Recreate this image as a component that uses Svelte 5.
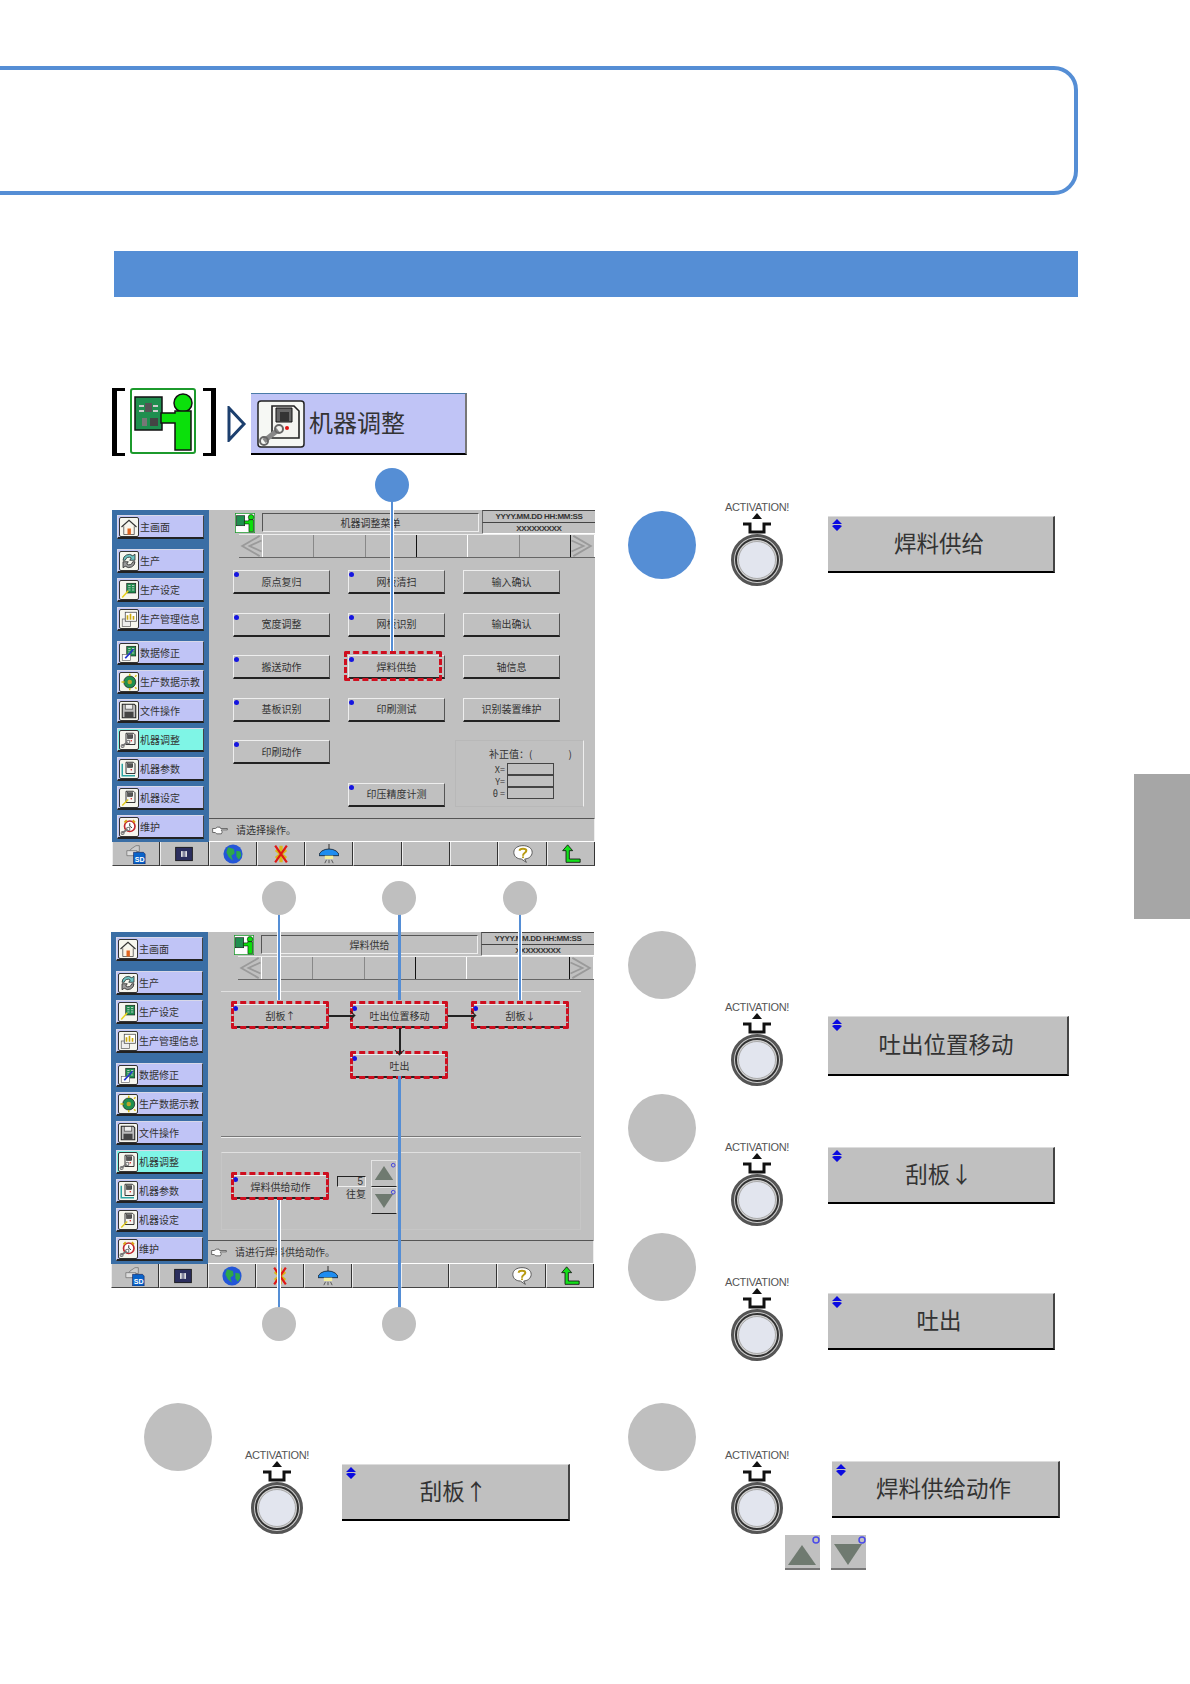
<script>
  // icon bodies, all drawn on a 24x24 box
  const machine = `<path d="M8 3h10l2 2v13H8z" fill="#f4f4f0" stroke="#222" stroke-width="1.2"/><rect x="10" y="5" width="7" height="5" fill="#555" stroke="#111" stroke-width=".6"/><circle cx="15" cy="13" r="1" fill="#d11"/>`;
  const wrench = `<path d="M3 20l7-5" stroke="#777" stroke-width="2.4"/><circle cx="11" cy="14.5" r="2.2" fill="none" stroke="#777" stroke-width="1.4"/><circle cx="3.5" cy="20" r="2" fill="none" stroke="#777" stroke-width="1.4"/>`;
  const board = `<rect x="9" y="3" width="12" height="13" fill="#1f8f4f" stroke="#111" stroke-width=".8"/><path d="M11 6h3M16 6h3M11 9h3M16 9h3M11 12h3M16 12h3" stroke="#ccc" stroke-width="1.2"/>`;
  const icons = {
    home: `<path d="M2 12 12 3l10 9" fill="none" stroke="#333" stroke-width="1.6"/><path d="M5 11v11h14V11" fill="#fbf5e8" stroke="#444"/><rect x="10" y="14" width="4.5" height="8" fill="#e0651f"/>`,
    cycle: `<path d="M4 11a8 8 0 0 1 13-6l3-2v8h-7l2-3a5 5 0 0 0-8 3z" fill="#6fc4c3" stroke="#222" stroke-width="1"/><path d="M20 13a8 8 0 0 1-13 6l-3 2v-8h7l-2 3a5 5 0 0 0 8-3z" fill="#9a9a9a" stroke="#222" stroke-width="1"/>`,
    setting: board + `<path d="M3 22l8-9" stroke="#e8d21d" stroke-width="2"/>`,
    info: `<rect x="3" y="12" width="11" height="10" fill="#eee" stroke="#666"/><rect x="7" y="3" width="15" height="12" fill="#fff" stroke="#444"/><path d="M10 13V7M14 13V5M18 13V8" stroke="#c9a80d" stroke-width="2.2"/>`,
    edit: board + `<rect x="3" y="14" width="11" height="8" fill="#fff" stroke="#555" stroke-width=".8"/><path d="M7 19l11-12" stroke="#2233cc" stroke-width="2.4"/>`,
    teach: `<circle cx="13" cy="12" r="8" fill="#1f8f4f" stroke="#222"/><circle cx="13" cy="12" r="3" fill="#b9a52a"/><path d="M2 12h4M13 1v3M13 20v3M20 5l2-2M20 19l2 2" stroke="#d8c016" stroke-width="2"/>`,
    file: `<path d="M3 3h16l2 2v16H3z" fill="#bbb" stroke="#222" stroke-width="1.4"/><rect x="7" y="3.5" width="10" height="6" fill="#eee" stroke="#333" stroke-width=".8"/><rect x="6" y="13" width="12" height="8" fill="#444"/>`,
    machine: machine + wrench,
    param: machine + `<path d="M3 5v16h17" fill="none" stroke="#2aa3a3" stroke-width="2"/>`,
    setup: machine + `<path d="M3 22l8-8" stroke="#e0c81a" stroke-width="2"/>`,
    maint: `<circle cx="13" cy="11" r="7" fill="#fff" stroke="#c1272d" stroke-width="2.2"/><path d="M13 7v4l3 2" fill="none" stroke="#222" stroke-width="1.2"/><path d="M6 6l3-3M20 6l-3-3" stroke="#d8a516" stroke-width="2.4"/>` + wrench,
    sd: `<path d="M6 6l6-4h4v7H4z" fill="#ccc" stroke="#666" stroke-width=".8"/><path d="M1 8h12v6H1z" fill="#ddd" stroke="#666" stroke-width=".8"/><path d="M9 10h12l2 2v12H9z" fill="#0a63c9" stroke="#114" stroke-width=".6"/><text x="10.5" y="21" font-size="8.5" font-weight="bold" font-family="Liberation Sans" fill="#fff">SD</text>`,
    chip: `<rect x="2" y="4" width="20" height="16" fill="#2b2e5e" stroke="#111"/><rect x="8.5" y="8.5" width="7" height="7" fill="#eee"/><path d="M11 8v8M13 8v8" stroke="#2b2e5e"/>`,
    globe: `<circle cx="12" cy="12" r="11.5" fill="#2356d8"/><path d="M6 4l7 2 1 5-4 3 2 6-5-4-3-6zM16 8l5 1 1 5-3 5-3-4z" fill="#2ea84a"/>`,
    stop: `<path d="M12 2v20M6 7l12 10M6 17 18 7" stroke="#d8b81a" stroke-width="4"/><path d="M5 2l14 20M19 2 5 22" stroke="#e01515" stroke-width="2.6"/>`,
    lamp: `<path d="M12 0v6" stroke="#555" stroke-width="1.6"/><path d="M0 14a12 8 0 0 1 24 0z" fill="#1e8df0" stroke="#123"/><rect x="7" y="14" width="10" height="4" fill="#f3ee9a"/><path d="M7 23l2-4M12 23v-4M17 23l-2-4" stroke="#444"/>`,
    help: `<path d="M12 2c6 0 11 3 11 8s-5 8-9 8l2 4-6-4C5 18 1 15 1 10s5-8 11-8z" fill="#fff" stroke="#444"/><path d="M8 8c0-3 8-3 8 0 0 3-4 2-4 6" fill="none" stroke="#b89a10" stroke-width="2.4"/><circle cx="12" cy="16" r="1.2" fill="#b89a10"/>`,
    back: `<path d="M6 21V8H2l6-7 6 7h-4v10h13v4H6z" fill="#13df1a" stroke="#111"/>`
  };

  const sideItems = [
    { icon: 'home', label: '主画面' },
    { icon: 'cycle', label: '生产', gap: true },
    { icon: 'setting', label: '生产设定' },
    { icon: 'info', label: '生产管理信息' },
    { icon: 'edit', label: '数据修正', gap: true },
    { icon: 'teach', label: '生产数据示教' },
    { icon: 'file', label: '文件操作' },
    { icon: 'machine', label: '机器调整', active: true },
    { icon: 'param', label: '机器参数' },
    { icon: 'setup', label: '机器设定' },
    { icon: 'maint', label: '维护' }
  ];

  const footIcons = ['sd', 'chip', 'globe', 'stop', 'lamp', '', '', '', 'help', 'back'];

  const menu = [
    { label: '原点复归' }, { label: '网板清扫' }, { label: '输入确认', plain: true },
    { label: '宽度调整' }, { label: '网板识别' }, { label: '输出确认', plain: true },
    { label: '搬送动作' }, { label: '焊料供给', hl: true }, { label: '轴信息', plain: true },
    { label: '基板识别' }, { label: '印刷测试' }, { label: '识别装置维护', plain: true },
    { label: '印刷动作' }
  ];

  // callouts, in coordinates of the figure area
  const lines = [
    { x: 280, y1: 29, y2: 195 },
    { x: 167, y1: 442, y2: 544 },
    { x: 287, y1: 442, y2: 544, thick: true },
    { x: 408, y1: 442, y2: 544 },
    { x: 167, y1: 744, y2: 868 },
    { x: 287, y1: 620, y2: 868, thick: true }
  ];
  const dots = [
    { x: 280, y: 29, blue: true },
    { x: 167, y: 442 }, { x: 287, y: 442 }, { x: 408, y: 442 },
    { x: 167, y: 868 }, { x: 287, y: 868 }
  ];
</script>

{#snippet icon(name)}
  <svg class="ico" viewBox="0 0 24 24">{@html icons[name]}</svg>
{/snippet}

{#snippet updown()}
  <svg class="updown" viewBox="0 0 12 12"><path d="M6 0l5 5H1zM3 6h6l2 1-5 5-5-5z" fill="#0a0ae0"/></svg>
{/snippet}

{#snippet chevrons(flip)}
  <svg class="chev" class:flip viewBox="0 0 24 24">
    <path d="M22 1 3 12l19 11M24 6 11 12l13 6" fill="none" stroke="#9a9a9a" stroke-width="2"/>
  </svg>
{/snippet}

{#snippet btn(item)}
  <div class="btn" class:hl={item.hl}>
    {#if !item.plain}<i class="dot"></i>{/if}
    {item.label}
  </div>
{/snippet}

{#snippet screen(title, status, content)}
  <div class="screen">
    <div class="side">
      {#each sideItems as item}
        <div class="side-btn" class:gap={item.gap} class:active={item.active}>
          <span class="side-ico">{@render icon(item.icon)}</span>{item.label}
        </div>
      {/each}
    </div>
    <div class="main">
      <div class="head">
        <svg class="head-ico" viewBox="0 0 66 66">
          <rect x="1" y="1" width="64" height="64" fill="#fff" stroke="#1c9a2c" stroke-width="3"/>
          <rect x="5" y="9" width="27" height="33" fill="#1f8f4f" stroke="#111" stroke-width="2"/>
          <circle cx="53" cy="14" r="9" fill="#0be00b" stroke="#111" stroke-width="2"/>
          <path d="M31 26h14v-4h16v40H46V36H31z" fill="#0be00b" stroke="#111" stroke-width="2"/>
        </svg>
        <div class="title">{title}</div>
        <div class="clock">
          <div>YYYY.MM.DD HH:MM:SS</div>
          <div>XXXXXXXXX</div>
        </div>
      </div>
      <div class="nav">
        <div class="nav-end">{@render chevrons(false)}</div>
        {#each [1, 2, 3, 4, 5, 6] as n}<div class="nav-cell"></div>{/each}
        <div class="nav-end">{@render chevrons(true)}</div>
      </div>
      <div class="content">{@render content()}</div>
      <div class="status">
        <svg class="hand" viewBox="0 0 24 12">
          <path d="M1 3h4l3-2h4l1 2h10v2H14v1l1 1v2l-1 2H7L5 9H1z" fill="#fff" stroke="#333"/>
        </svg>
        {status}
      </div>
    </div>
    <div class="foot">
      {#each footIcons as name}
        <div class="foot-cell">{#if name}{@render icon(name)}{/if}</div>
      {/each}
    </div>
  </div>
{/snippet}

{#snippet menuPage()}
  <div class="menu">
    {#each menu as item}
      {@render btn(item)}
    {/each}
    <div class="offset-panel">
      <div class="offset-title">补正值：(<span></span>)</div>
      <div class="offset-row"><label>X=</label><b></b></div>
      <div class="offset-row"><label>Y=</label><b></b></div>
      <div class="offset-row"><label>θ =</label><b></b></div>
    </div>
    <div class="menu-last">{@render btn({ label: '印压精度计测' })}</div>
  </div>
{/snippet}

{#snippet solderPage()}
  <div class="flow-group">
    <div class="flow">
      {@render btn({ label: '刮板↑', hl: true })}
      <div class="arrow-r"></div>
      {@render btn({ label: '吐出位置移动', hl: true })}
      <div class="arrow-r"></div>
      {@render btn({ label: '刮板↓', hl: true })}
      <div class="arrow-d"></div>
      {@render btn({ label: '吐出', hl: true })}
    </div>
  </div>
  <div class="sep"></div>
  <div class="op-group">
    {@render btn({ label: '焊料供给动作', hl: true })}
    <div class="count">
      <div class="count-box">5</div>
      <div class="count-label">往复</div>
    </div>
    <div class="steppers">
      <div class="stepper"><svg viewBox="0 0 26 26"><path d="M13 5l10 15H3z" fill="#6f7a70"/><circle cx="23" cy="4" r="2" fill="none" stroke="#3a3ae0"/></svg></div>
      <div class="stepper"><svg viewBox="0 0 26 26"><path d="M13 21 3 6h20z" fill="#6f7a70"/><circle cx="23" cy="4" r="2" fill="none" stroke="#3a3ae0"/></svg></div>
    </div>
  </div>
{/snippet}

{#snippet activation()}
  <div class="act">
    <div class="act-label">ACTIVATION!</div>
    <svg width="60" height="76" viewBox="0 0 60 76">
      <path d="M30 1l5 6H25z" fill="#111"/>
      <path d="M16 12h7v8h14v-8h7" fill="none" stroke="#111" stroke-width="3"/>
      <circle cx="30" cy="48" r="24.5" fill="#d0d0d0" stroke="#555" stroke-width="3"/>
      <circle cx="30" cy="48" r="21" fill="none" stroke="#333" stroke-width="2"/>
      <circle cx="30" cy="48" r="18.5" fill="#e2e5ee" stroke="#aaa"/>
    </svg>
  </div>
{/snippet}

{#snippet step(cls, label)}
  <div class="step {cls}">
    <div class="num"></div>
    {@render activation()}
    <div class="big-col">
      <div class="big">{@render updown()}{label}</div>
      {#if cls === 's6'}
        <div class="minis">
          <div class="mini"><svg viewBox="0 0 35 35"><path d="M17 10l14 20H3z" fill="#6f7a70"/><circle cx="31" cy="5" r="3" fill="none" stroke="#4a4ae8" stroke-width="1.5"/></svg></div>
          <div class="mini"><svg viewBox="0 0 35 35"><path d="M17 30 3 9h28z" fill="#6f7a70"/><circle cx="31" cy="5" r="3" fill="none" stroke="#4a4ae8" stroke-width="1.5"/></svg></div>
        </div>
      {/if}
    </div>
  </div>
{/snippet}

<div class="page">
  <div class="title-box"></div>
  <div class="bar"></div>

  <div class="path">
    <div class="bracketed">
      <svg width="66" height="66" viewBox="0 0 66 66">
        <rect x="1" y="1" width="64" height="64" rx="2" fill="#fff" stroke="#1c9a2c" stroke-width="2"/>
        <rect x="5" y="9" width="27" height="33" fill="#1f8f4f" stroke="#111" stroke-width="1.5"/>
        <rect x="15" y="15" width="7" height="9" fill="#555"/>
        <path d="M9 18h5M23 18h5M9 23h5M23 23h5" stroke="#ccc" stroke-width="2"/>
        <rect x="12" y="30" width="5" height="8" fill="#777"/><rect x="20" y="30" width="8" height="8" fill="#444"/>
        <circle cx="53" cy="15" r="9" fill="#0be00b" stroke="#111" stroke-width="1.5"/>
        <path d="M31 25h14v-2h16v39H45V35H31z" fill="#0be00b" stroke="#111" stroke-width="1.5"/>
      </svg>
    </div>
    <svg class="tri" width="20" height="36" viewBox="0 0 20 36">
      <path d="M2 2l15 16L2 34z" fill="none" stroke="#1c3f6e" stroke-width="3"/>
    </svg>
    <div class="path-btn">
      <svg class="path-ico" viewBox="0 0 48 48">
        <rect x="1" y="1" width="46" height="46" rx="3" fill="#f6f8f4" stroke="#222" stroke-width="1.5"/>
        <path d="M15 6h22l5 5v27H15z" fill="#f4f4f0" stroke="#222" stroke-width="1.6"/>
        <path d="M19 8h16v14H19z" fill="#666" stroke="#111"/><rect x="23" y="12" width="9" height="9" fill="#333"/>
        <circle cx="30" cy="28" r="2" fill="#d11"/>
        <path d="M7 41l14-11" stroke="#888" stroke-width="5"/>
        <circle cx="22" cy="29" r="4" fill="none" stroke="#666" stroke-width="2"/>
        <circle cx="7" cy="41" r="4" fill="none" stroke="#666" stroke-width="2"/>
      </svg>
      机器调整
    </div>
  </div>

  <div class="body">
    <div class="figures">
      {@render screen('机器调整菜单', '请选择操作。', menuPage)}
      <div class="second">{@render screen('焊料供给', '请进行焊料供给动作。', solderPage)}</div>
      {@render step('s5', '刮板↑')}
    </div>
    <div class="steps">
      {@render step('s1', '焊料供给')}
      {@render step('s2', '吐出位置移动')}
      {@render step('s3', '刮板↓')}
      {@render step('s4', '吐出')}
      {@render step('s6', '焊料供给动作')}
    </div>

    {#each lines as l}
      <div class="callout-line" class:thick={l.thick} style="left: {l.x}px; top: {l.y1}px; height: {l.y2 - l.y1}px;"></div>
    {/each}
    {#each dots as d}
      <div class="callout-dot" class:blue={d.blue} style="left: {d.x}px; top: {d.y}px;"></div>
    {/each}
  </div>

  <div class="tab"></div>
</div>

<style>
  :global(body) {
    margin: 0;
    background: #fff;
  }

  .page {
    position: relative;
    width: 1190px;
    height: 1684px;
    overflow: hidden;
    padding-top: 66px;
    box-sizing: border-box;
    font-family: "Noto Sans CJK SC", "Liberation Sans", sans-serif;
    color: #222;
  }

  .title-box {
    width: 1118px;
    height: 129px;
    margin-left: -40px;
    box-sizing: border-box;
    border: 4px solid #558ed5;
    border-radius: 24px;
  }

  .bar {
    width: 964px;
    height: 46px;
    margin: 56px 0 0 114px;
    background: #558ed5;
  }

  .path {
    display: flex;
    align-items: center;
    height: 68px;
    margin: 91px 0 0 112px;
  }

  .bracketed {
    position: relative;
    display: flex;
    width: 104px;
    height: 68px;
    box-sizing: border-box;
    padding: 0 17px;
    border: solid #000;
    border-width: 3px 5px;
    border-image: linear-gradient(to right, #000 13px, transparent 13px, transparent 91px, #000 91px) 3 5;
    align-items: center;
    justify-content: center;
  }

  .bracketed svg {
    flex: none;
    margin: -2px 0 0 -3px;
  }

  .tri {
    margin: 4px 0 0 11px;
  }

  .path-btn {
    display: flex;
    align-items: center;
    gap: 4px;
    width: 216px;
    height: 62px;
    align-self: flex-end;
    margin: 0 0 1px 4px;
    box-sizing: border-box;
    padding: 0 0 4px 6px;
    background: #c0c4f6;
    border-top: 1px solid #4a7ba8;
    border-right: 2px solid #777;
    border-bottom: 2px solid #000;
    font-size: 24px;
    color: #333;
  }

  .path-ico {
    width: 48px;
    height: 48px;
    margin-top: 4px;
  }

  .body {
    position: relative;
    display: grid;
    grid-template-columns: 483px auto;
    column-gap: 33px;
    margin-left: 112px;
  }

  .figures {
    padding-top: 54px;
  }

  .second {
    margin: 66px 0 0 -1px;
  }

  /* machine screen */
  .screen {
    display: grid;
    grid-template-columns: 97px 386px;
    grid-template-rows: 332px 24px;
    width: 483px;
    height: 356px;
    background: #c0c0c0;
    font-size: 10px;
    line-height: 1;
    color: #333;
  }

  .side {
    display: flex;
    flex-direction: column;
    gap: 5px;
    padding: 5px 5px 0;
    background: #3a6ea5;
  }

  .side-btn {
    display: flex;
    align-items: center;
    gap: 1px;
    height: 24px;
    box-sizing: border-box;
    padding-left: 1px;
    background: #c0c4f6;
    border: solid;
    border-width: 1px 1px 2px 1px;
    border-color: #d8d8e8 #444 #222 #d8d8e8;
  }

  .side-btn.gap {
    margin-top: 5px;
  }

  .side-btn.active {
    background: #7ff5e6;
  }

  .side-ico {
    display: flex;
    flex: none;
    width: 20px;
    height: 20px;
    box-sizing: border-box;
    border: 1px solid #333;
    border-radius: 2px;
    background: #f6f6ee;
  }

  .ico {
    width: 100%;
    height: 100%;
  }

  .main {
    display: flex;
    flex-direction: column;
  }

  .head {
    display: flex;
    height: 24px;
  }

  .head-ico {
    width: 20px;
    height: 20px;
    margin: 3px 0 0 26px;
  }

  .title {
    display: flex;
    align-items: center;
    justify-content: center;
    width: 217px;
    height: 19px;
    margin: 3px 0 0 7px;
    box-sizing: border-box;
    border: solid;
    border-width: 1px;
    border-color: #555 #eee #eee #555;
  }

  .clock {
    width: 113px;
    margin-left: 3px;
    font-family: "Liberation Sans", sans-serif;
    font-size: 8px;
    font-weight: bold;
    letter-spacing: -0.3px;
    text-align: center;
  }

  .clock div {
    height: 12px;
    box-sizing: border-box;
    line-height: 11px;
    border-top: 1px solid #444;
    border-left: 1px solid #666;
    white-space: nowrap;
  }

  .clock div + div {
    border-bottom: 1px solid #fff;
  }

  .nav {
    display: flex;
    height: 24px;
    margin-left: 30px;
    background: #c0c0c0;
    border-top: 1px solid #eee;
    border-bottom: 1px solid #666;
    box-sizing: border-box;
  }

  .nav-end {
    display: flex;
    flex: none;
    width: 24px;
    border-right: 1px solid #fff;
    box-sizing: border-box;
  }

  .chev {
    width: 23px;
    height: 22px;
  }

  .chev.flip {
    transform: scaleX(-1);
  }

  .nav-cell {
    flex: 1;
    border-right: 1px solid #888;
  }

  .nav-cell:nth-child(4), .nav-cell:nth-child(7) {
    border-right-color: #111;
  }

  .nav-cell:nth-child(5) {
    border-right-color: #fff;
  }

  .content {
    height: 260px;
  }

  .status {
    display: flex;
    align-items: center;
    gap: 8px;
    height: 24px;
    box-sizing: border-box;
    padding-left: 3px;
    border-top: 1px solid #555;
    border-bottom: 1px solid #fff;
    border-right: 1px solid #eee;
  }

  .hand {
    width: 16px;
    height: 9px;
  }

  .foot {
    display: flex;
    grid-column: 1 / 3;
  }

  .foot-cell {
    display: flex;
    align-items: center;
    justify-content: center;
    flex: 1;
    box-sizing: border-box;
    background: #c0c0c0;
    border-right: 1px solid #333;
    border-left: 1px solid #eee;
    border-bottom: 1px solid #444;
  }

  .foot-cell .ico {
    width: 20px;
    height: 20px;
  }

  .btn {
    position: relative;
    display: flex;
    align-items: center;
    justify-content: center;
    height: 24px;
    box-sizing: border-box;
    background: #c0c0c0;
    border: solid;
    border-width: 1px 1px 2px 1px;
    border-color: #eee #555 #222 #eee;
    white-space: nowrap;
  }

  /* the dashed marks sit a little off their buttons, as in the manual */
  .btn.hl::after {
    content: "";
    position: absolute;
    left: -2px;
    top: -4px;
    width: 98px;
    height: 28px;
    box-sizing: border-box;
    border: 3px dashed #cf0f1f;
    border-radius: 2px;
  }

  .menu .btn.hl::after {
    left: -5px;
    top: -5px;
    height: 30px;
  }

  .dot {
    position: absolute;
    left: 0;
    top: 1px;
    width: 5px;
    height: 5px;
    background: #1515e0;
    border-radius: 50%;
  }

  /* menu page */
  .menu {
    display: grid;
    grid-template-columns: 97px 97px 97px;
    grid-auto-rows: 24px;
    column-gap: 18px;
    row-gap: 18.5px;
    padding: 12px 0 0 24px;
  }

  .menu-last {
    grid-column: 2;
    grid-row: 6;
  }

  .offset-panel {
    grid-column: 3;
    grid-row: 5 / 7;
    width: 129px;
    height: 67px;
    margin-left: -8px;
    box-sizing: border-box;
    padding-top: 8px;
    border: 1px solid #b8b8b8;
    border-right-color: #eee;
  }

  .offset-title {
    display: flex;
    height: 14px;
    padding-left: 33px;
  }

  .offset-title span {
    width: 36px;
  }

  .offset-row {
    display: flex;
    align-items: center;
    justify-content: flex-end;
    height: 12px;
    padding-right: 29px;
    font-size: 9px;
  }

  .offset-row label {
    margin-right: 2px;
  }

  .offset-row b {
    width: 47px;
    height: 12px;
    box-sizing: border-box;
    border: 1px solid #444;
  }

  /* solder supply page */
  .flow-group {
    width: 360px;
    height: 145px;
    margin: 11px 0 0 13px;
    box-sizing: border-box;
    border-top: 1px solid #e0e0e0;
    padding: 12px 0 0 11px;
  }

  .flow {
    display: grid;
    grid-template-columns: 97px 22px 97px 24px 97px;
    grid-template-rows: 24px 26px 24px;
  }

  .arrow-r {
    position: relative;
    z-index: 1;
    align-self: center;
    height: 2px;
    margin-right: -3px;
    background: #222;
  }

  .arrow-r::after {
    content: "";
    position: absolute;
    right: 0;
    top: -3px;
    width: 7px;
    height: 7px;
    box-sizing: border-box;
    border: solid #222;
    border-width: 1px 1px 0 0;
    transform: rotate(45deg);
  }

  .arrow-d {
    position: relative;
    z-index: 1;
    grid-column: 3;
    grid-row: 2;
    justify-self: center;
    width: 2px;
    background: #222;
  }

  .arrow-d::after {
    content: "";
    position: absolute;
    left: -3px;
    bottom: 0;
    width: 7px;
    height: 7px;
    box-sizing: border-box;
    border: solid #222;
    border-width: 0 1px 1px 0;
    transform: rotate(45deg);
  }

  .flow > :global(.btn:last-child) {
    grid-column: 3;
    grid-row: 3;
  }

  .sep {
    width: 360px;
    height: 2px;
    margin-left: 13px;
    box-sizing: border-box;
    border-top: 1px solid #777;
    border-bottom: 1px solid #eee;
  }

  .op-group {
    display: flex;
    align-items: center;
    width: 360px;
    height: 78px;
    margin: 14px 0 0 13px;
    box-sizing: border-box;
    padding: 0 0 8px 10px;
    border: 1px solid #c6c6c6;
    border-top-color: #e0e0e0;
  }

  .op-group > :global(.btn) {
    width: 97px;
  }

  .count {
    width: 29px;
    margin-left: 8px;
  }

  .count-box {
    height: 11px;
    box-sizing: border-box;
    padding-right: 2px;
    border: solid;
    border-width: 1px;
    border-color: #222 #eee #eee #222;
    font-family: "Liberation Sans", sans-serif;
    font-size: 10px;
    line-height: 9px;
    text-align: right;
  }

  .count-label {
    margin-top: 2px;
    text-align: right;
  }

  .steppers {
    margin-left: 5px;
  }

  .stepper {
    width: 26px;
    height: 27px;
    box-sizing: border-box;
    border: 1px solid #e4e4e4;
    border-bottom: 1px solid #222;
  }

  .stepper svg {
    display: block;
    width: 24px;
    height: 25px;
  }

  /* steps */
  .step {
    display: flex;
    align-items: flex-start;
  }

  .num {
    flex: none;
    width: 68px;
    height: 68px;
    margin-top: var(--c, 0);
    border-radius: 50%;
    background: #bfbfbf;
  }

  .act {
    display: flex;
    flex-direction: column;
    align-items: center;
    flex: none;
    width: 80px;
    margin: var(--a) 0 0 21px;
  }

  .act-label {
    height: 11px;
    margin-top: 1px;
    margin-bottom: -1px;
    font-family: "Liberation Sans", sans-serif;
    font-size: 11px;
    line-height: 11px;
    letter-spacing: -0.3px;
    color: #555;
  }

  .big-col {
    flex: none;
    margin: var(--b) 0 0 var(--l, 31px);
    width: var(--w, 227px);
  }

  .big {
    position: relative;
    display: flex;
    align-items: center;
    justify-content: center;
    height: var(--h, 57px);
    box-sizing: border-box;
    padding: 0 3px 5px 0;
    background: #c0c0c0;
    border-top: 1px solid #ddd;
    border-right: 2px solid #444;
    border-bottom: 2px solid #000;
    font-size: 22.5px;
    color: #333;
    white-space: nowrap;
  }

  .updown {
    position: absolute;
    left: 3px;
    top: 2px;
    width: 12px;
    height: 12px;
  }

  .steps {
    padding-top: 45px;
  }

  .s1 { height: 429px; --c: 10px; --a: 0px; --b: 15px; }
  .s1 .num { background: #558ed5; }
  .s2 { height: 164px; --c: 1px; --a: 71px; --b: 86px; --w: 241px; --h: 60px; }
  .s3 { height: 138px; --a: 47px; --b: 53px; }
  .s4 { height: 171px; --c: 1px; --a: 44px; --b: 61px; }
  .s5 { margin: 115px 0 0 32px; --a: 46px; --b: 61px; --l: 25px; --w: 228px; }
  .s5 .act { margin-left: 25px; }
  .s6 { --a: 46px; --b: 58px; --l: 35px; --w: 228px; }

  .minis {
    display: flex;
    gap: 11px;
    margin: 17px 0 0 -47px;
  }

  .mini {
    width: 35px;
    height: 35px;
    background: #c0c0c0;
    border-bottom: 2px solid #777;
    box-sizing: border-box;
  }

  .mini svg {
    display: block;
  }

  /* callouts lie over the screens */
  .callout-line {
    position: absolute;
    z-index: 2;
    width: 2px;
    margin-left: -1px;
    background: #558ed5;
    box-shadow: 1px 0 0 #fff, -1px 0 0 #fff;
  }

  .callout-line.thick {
    width: 3px;
    box-shadow: none;
  }

  .callout-dot {
    position: absolute;
    z-index: 2;
    width: 34px;
    height: 34px;
    margin: -17px 0 0 -17px;
    border-radius: 50%;
    background: #bfbfbf;
  }

  .callout-dot.blue {
    background: #558ed5;
  }

  .tab {
    position: absolute;
    left: 1134px;
    top: 774px;
    width: 56px;
    height: 145px;
    background: #a6a6a6;
  }
</style>
